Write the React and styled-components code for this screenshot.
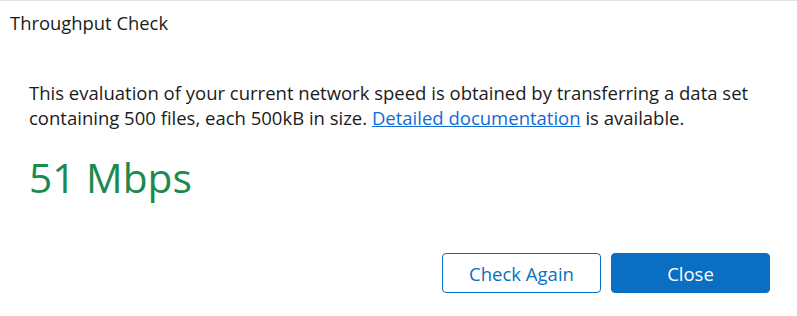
import React from "react";
import styled, { createGlobalStyle } from "styled-components";

const Global = createGlobalStyle`
  html, body { margin: 0; padding: 0; background: #ffffff; }
  body { font-family: "Open Sans", "Noto Sans", sans-serif; color: #1b1b1b; }
`;

const Dialog = styled.div`
  width: 797px;
  height: 316px;
  box-sizing: border-box;
  border-top: 1px solid #e1e1e1;
  display: flex;
  flex-direction: column;
`;

const Title = styled.div`
  padding: 10px 0 0 10px;
  font-size: 18.4px;
  line-height: 24px;
  color: #1b1b1b;
`;

const Body = styled.div`
  padding: 0 20px 0 29px;
  margin-top: 45px;
  display: flex;
  flex-direction: column;
`;

const Text = styled.p`
  margin: 0;
  font-size: 18.5px;
  line-height: 25px;
  max-width: 745px;
`;

const Link = styled.a`
  color: #0f6cd6;
  text-decoration: underline;
  cursor: pointer;
`;

const Speed = styled.div`
  margin-top: 21px;
  font-size: 40.7px;
  line-height: 52px;
  color: #1b8a4f;
`;

const Footer = styled.div`
  margin-top: auto;
  padding: 0 27px 23px 0;
  display: flex;
  justify-content: flex-end;
  gap: 10px;
`;

const Button = styled.button`
  width: 159px;
  height: 40px;
  box-sizing: border-box;
  border-radius: 4px;
  font-family: inherit;
  font-size: 18.5px;
  padding: 0;
  cursor: pointer;
  border: 1.5px solid #0a6fc2;
  background: ${(p) => (p.$primary ? "#0a6fc2" : "#ffffff")};
  color: ${(p) => (p.$primary ? "#ffffff" : "#0a6fc2")};
`;

export default function App() {
  return (
    <>
      <Global />
      <Dialog>
        <Title>Throughput Check</Title>
        <Body>
          <Text>
            This evaluation of your current network speed is obtained by transferring a data set
            containing 500 files, each 500kB in size. <Link>Detailed documentation</Link> is available.
          </Text>
          <Speed>51 Mbps</Speed>
        </Body>
        <Footer>
          <Button>Check Again</Button>
          <Button $primary>Close</Button>
        </Footer>
      </Dialog>
    </>
  );
}
